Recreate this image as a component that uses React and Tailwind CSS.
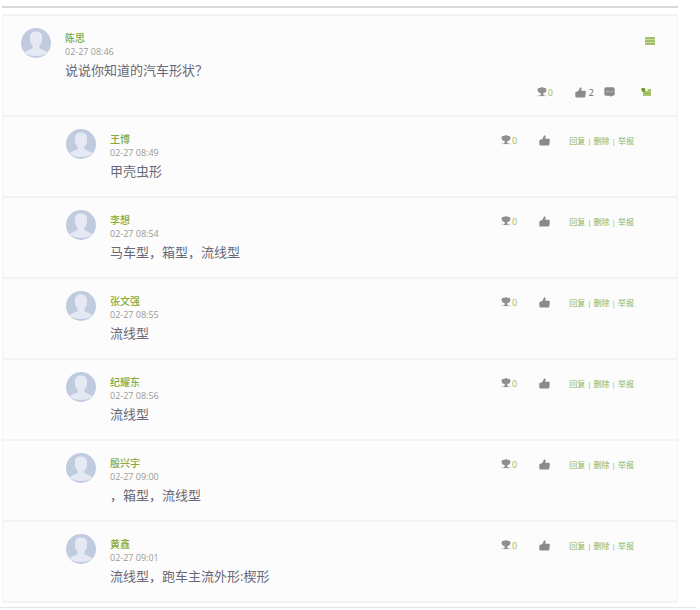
import React from 'react';

const replies = [
  { name: '王博', time: '02-27 08:49', text: '甲壳虫形' },
  { name: '李想', time: '02-27 08:54', text: '马车型，箱型，流线型' },
  { name: '张文强', time: '02-27 08:55', text: '流线型' },
  { name: '纪耀东', time: '02-27 08:56', text: '流线型' },
  { name: '殷兴宇', time: '02-27 09:00', text: '，箱型，流线型' },
  { name: '黄鑫', time: '02-27 09:01', text: '流线型，跑车主流外形:楔形' },
];

function Avatar() {
  return (
    <svg viewBox="0 0 30 30" className="size-[30px] shrink-0" aria-hidden="true">
      <circle cx="15" cy="15" r="15" fill="#c1cbe0" />
      <path
        d="M15 3.500c-4 0-6 2-6 5.200v3c0 2.600 1.200 4.600 2.600 5.800v2.200c0 1.300-5.300 1.800-8 4.800C6 27 10.500 28 15 28s9-1 11.400-3.500c-2.700-3-8-3.500-8-4.800v-2.200c1.400-1.200 2.600-3.200 2.600-5.800v-3c0-3.200-2-5.200-6-5.200z"
        fill="#e4e9f3"
      />
    </svg>
  );
}

function FlowerIcon() {
  return (
    <svg viewBox="0 0 10 10" className="size-[10px]" aria-hidden="true">
      <path d="M.3 7.800h9.400v1.500H.3z" fill="#dadada" />
      <path
        d="M5 0 6.500.7 8.700 1l.9 2-1 2.200-2.300 1v1.500l1.300 1.200H2.400l1.300-1.200V6.200l-2.300-1L.4 3l.9-2 2.200-.3z"
        fill="#8f8f8f"
      />
    </svg>
  );
}

function ThumbIcon() {
  return (
    <svg viewBox="0 0 11 11" className="size-[11px]" aria-hidden="true">
      <path
        d="M5 .6c1-.5 1.700.1 1.600 1.100L6.300 3.800h3.200c1 0 1.400.7 1.300 1.500l-.4 3.700c-.1 1-.8 1.500-1.700 1.500H2C.9 10.500.3 9.900.3 8.900V6.300c0-1 .6-1.600 1.600-1.700.9-.1 1.500-.5 1.900-1.300z"
        fill="#8a8a8a"
      />
    </svg>
  );
}

function CommentIcon() {
  return (
    <svg viewBox="0 0 11 10" className="h-[10px] w-[11px]" aria-hidden="true">
      <path d="M2 .3h7A1.700 1.700 0 0 1 10.700 2v5A1.700 1.700 0 0 1 9 8.700H8L6.800 9.700 5.500 8.700H2A1.700 1.700 0 0 1 .3 7V2A1.700 1.700 0 0 1 2 .3z" fill="#8a8a8a" />
      <path d="M2.300 3.800h1.600v1.400H2.300zM4.700 3.800h1.600v1.400H4.700zM7.100 3.800h1.600v1.400H7.100z" fill="#bdbdbd" />
    </svg>
  );
}

function MenuIcon() {
  return (
    <svg viewBox="0 0 10 8" className="h-2 w-[10px]" aria-hidden="true">
      <path d="M0 0h10v8H0z" fill="#c9daa0" />
      <path d="M0 0h10v2H0zM0 3h10v2H0zM0 6h10v2H0z" fill="#a3c168" />
    </svg>
  );
}

function FoldIcon() {
  return (
    <svg viewBox="0 0 10 8" className="h-2 w-[10px]" aria-hidden="true">
      <path d="M2 3h4.500V1H10v7H2z" fill="#a8c572" />
      <path d="M0 1 1 0h2.500L4.500 1 4 4H1.500z" fill="#6f9c26" />
      <path d="M3 5.500h6.500" stroke="#8fb550" />
    </svg>
  );
}

function Body({ name, time, text }) {
  return (
    <div className="min-w-0 flex-1">
      <a href="#" className="block w-fit text-[10px] leading-[14px] font-medium text-[#84aa3c]">
        {name}
      </a>
      <time className="block text-[9px] leading-[13px] text-[#999999]">{time}</time>
      <p className="mt-0.5 text-[13px] leading-5 text-[#686878]">{text}</p>
    </div>
  );
}

function Flowers() {
  return (
    <button type="button" aria-label="送花" className="flex items-center text-[9px] leading-3 text-[#9dbb60]">
      <FlowerIcon />
      <span className="mt-[2px] ml-px">0</span>
    </button>
  );
}

function Reply({ reply }) {
  return (
    <li className="flex h-[81px] items-start border-t-2 border-[#f3f3f3] pt-3 pr-[43px] pl-[63px]">
      <Avatar />
      <div className="ml-[14px] flex min-w-0 flex-1 pt-[3px]">
        <Body {...reply} />
        <div className="flex h-4 items-center">
          <Flowers />
          <button type="button" aria-label="赞" className="ml-[22px]">
            <ThumbIcon />
          </button>
          <div className="mt-[2px] ml-[19px] flex gap-[2px] text-[8px] leading-3 whitespace-nowrap text-[#93b44f]">
            <a href="#">回复</a>
            <span>|</span>
            <a href="#">删除</a>
            <span>|</span>
            <a href="#">举报</a>
          </div>
        </div>
      </div>
    </li>
  );
}

export default function App() {
  return (
    <div className="bg-white pt-[6px] font-['Open_Sans','Noto_Sans_CJK_SC',sans-serif]">
      <div className="mr-[22px] ml-[2px]">
        <div className="h-[2px] bg-[#d9d9d9]" />
        <section className="mt-[6px] border-x border-t-2 border-b-2 border-[#f3f3f3] bg-[#fcfcfc]">
          <article className="h-[99px] pt-3 pr-[22px] pl-[18px]">
            <div className="flex items-start">
              <Avatar />
              <div className="ml-[14px] flex flex-1 pt-[3px]">
                <Body name="陈思" time="02-27 08:46" text="说说你知道的汽车形状？" />
                <button type="button" aria-label="菜单" className="mt-[6px] self-start">
                  <MenuIcon />
                </button>
              </div>
            </div>
            <div className="mt-[5px] flex items-center justify-end pr-1">
              <Flowers />
              <button type="button" aria-label="赞" className="ml-[22px] flex items-center text-[9px] leading-3 text-[#666666]">
                <ThumbIcon />
                <span className="mt-[2px] ml-[3px]">2</span>
              </button>
              <button type="button" aria-label="评论" className="ml-[10px]">
                <CommentIcon />
              </button>
              <button type="button" aria-label="收起" className="ml-[26px]">
                <FoldIcon />
              </button>
            </div>
          </article>
          <ul>
            {replies.map((reply) => (
              <Reply key={reply.name} reply={reply} />
            ))}
          </ul>
        </section>
      </div>
      <div className="mt-1 mr-1 h-px bg-[#e6e6e6]" />
    </div>
  );
}
